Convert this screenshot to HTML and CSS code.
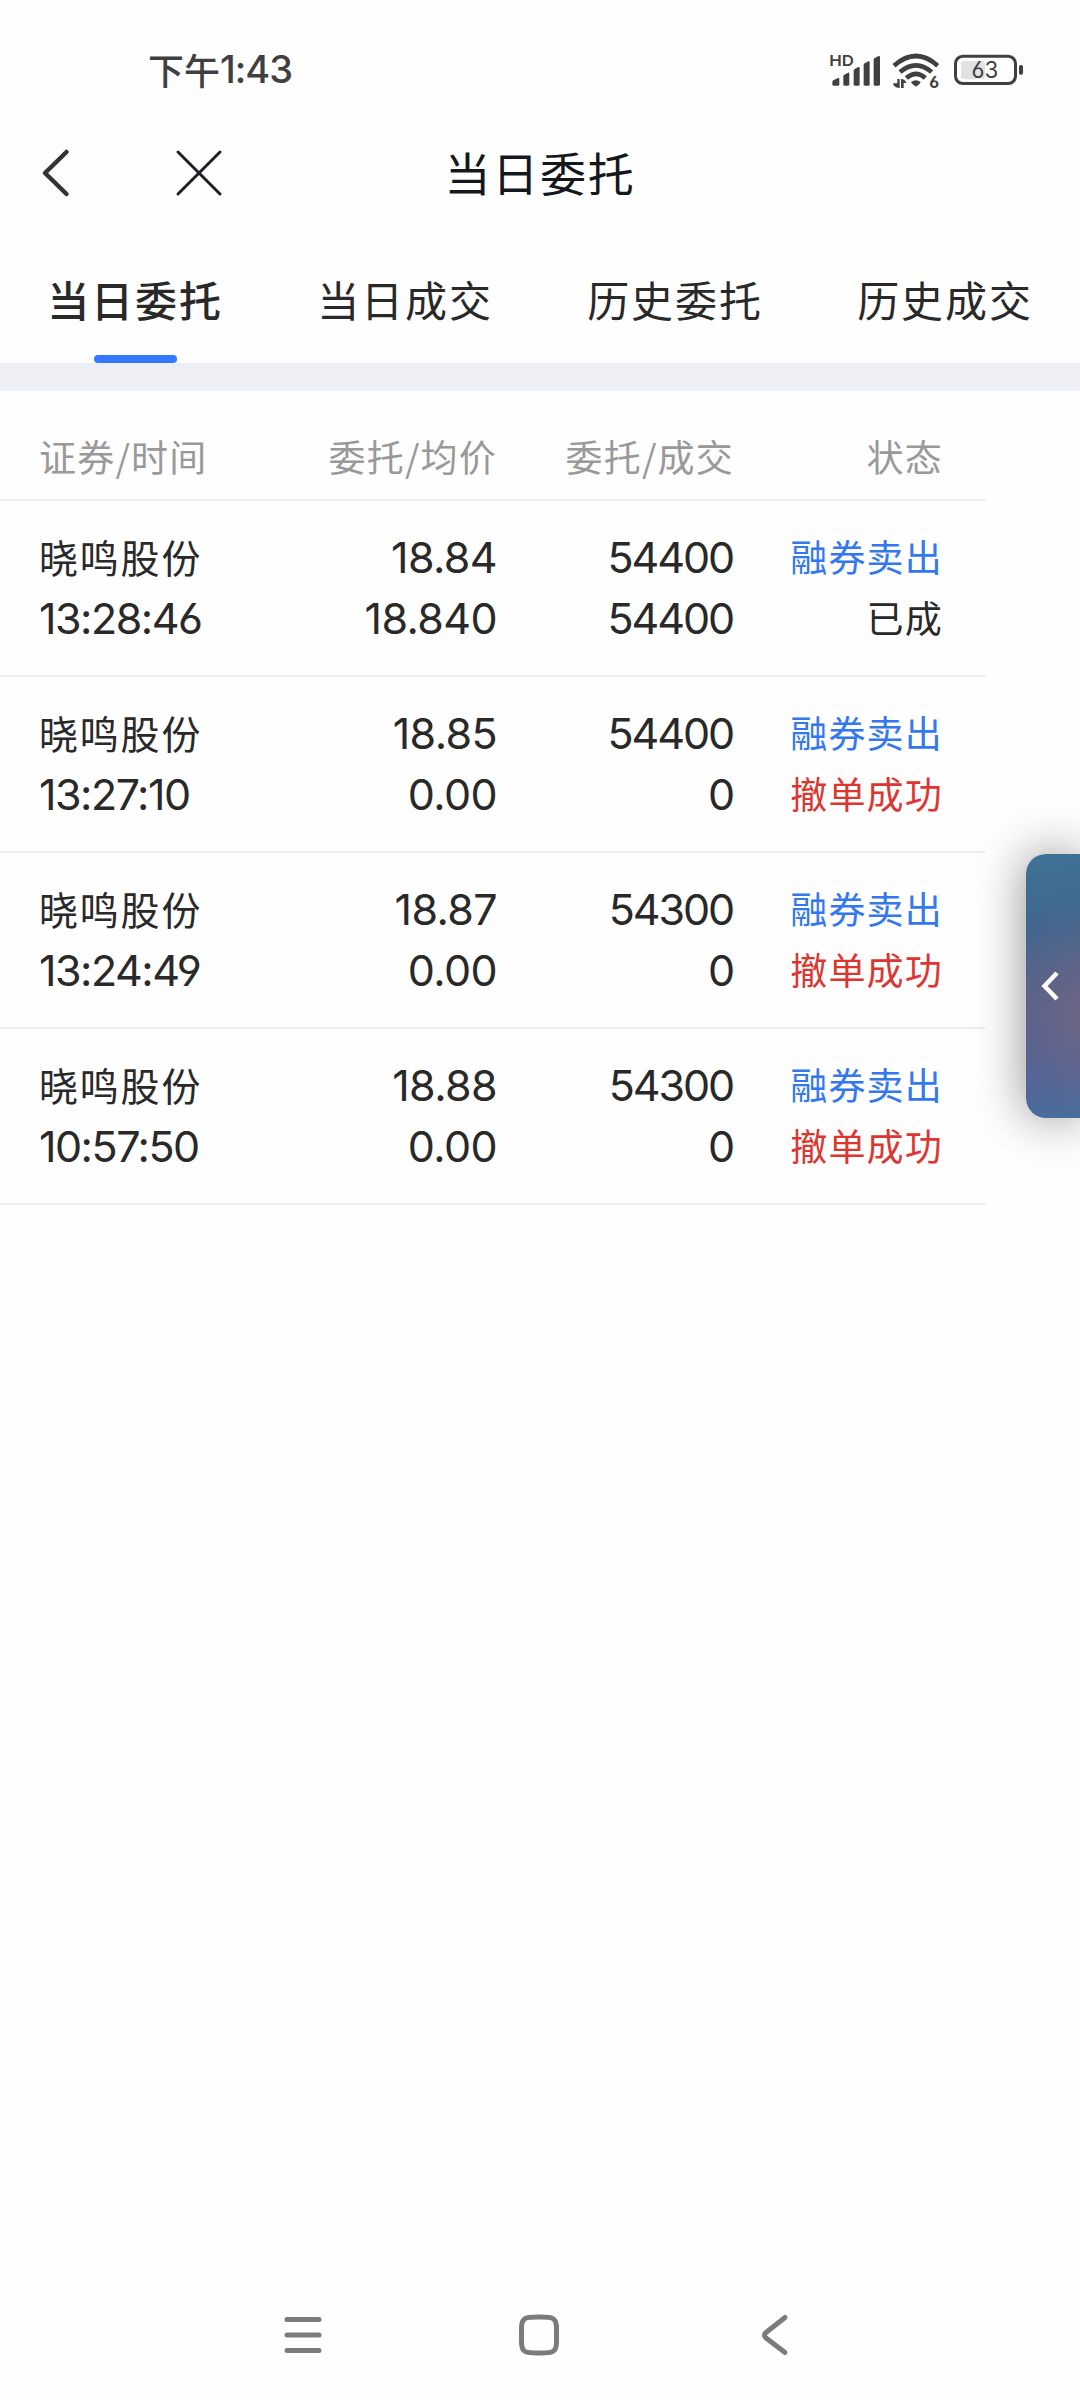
FILE: index.html
```html
<!DOCTYPE html>
<html lang="zh-CN">
<head>
    <meta charset="UTF-8">
    <meta name="viewport" content="width=device-width, initial-scale=1.0">
    <title>当日委托</title>
    <link rel="stylesheet" href="styles.css">
</head>
<body>

    <div class="status-bar">
        <div class="clock">下午<span class="clock-digits">1:43</span></div>
        <svg class="status-icons" viewBox="0 0 690 180">
            <text class="hd" x="58" y="78" textLength="74" lengthAdjust="spacingAndGlyphs">HD</text>
            <!-- signal -->
            <g class="fill">
                <path d="M67 133v-7q0-3 3-5l14-7q4-1 4 3v16q0 4-4 4H71q-4 0-4-4z"/>
                <path d="M100 133v-24q0-3 3-5l11-6q4-1 4 3v32q0 4-4 4h-10q-4 0-4-4z"/>
                <path d="M131 133V92q0-3 3-5l11-6q4-1 4 3v49q0 4-4 4h-10q-4 0-4-4z"/>
                <path d="M161 133V75q0-3 3-5l11-6q4-1 4 3v66q0 4-4 4h-10q-4 0-4-4z"/>
                <path d="M191 133V59q0-3 3-5l12-6q4-1 4 3v82q0 4-4 4h-11q-4 0-4-4z"/>
                <path d="M303 126q14-11 29 0-2 8-14 14-12-6-15-14z"/>
                <path d="M262 117h7v27q-12 0-19-9v-5h12z"/>
                <path d="M273 144v-27q12 0 16 12h-8v15z"/>
            </g>
            <!-- wifi -->
            <g class="arc">
                <path d="M252 77q66-58 131 0"/>
                <path d="M270 96q48-40 95 0"/>
                <path d="M289 114q29-25 57 0"/>
            </g>
            <text class="wifi-gen" x="358" y="144">6</text>
            <!-- battery -->
            <rect class="charge" x="453" y="63" width="72" height="54" rx="8"/>
            <rect class="shell" x="436.500" y="48.500" width="180" height="82" rx="22"/>
            <rect class="fill" x="627" y="75" width="12" height="29" rx="5"/>
            <text class="percent" x="525" y="114">63</text>
        </svg>
    </div>

    <header class="title-bar">
        <svg class="back" viewBox="0 0 34 54"><path d="M28.500 6 7 27l21.500 21"/></svg>
        <svg class="close" viewBox="0 0 50 50"><path d="M4 4l42 42M46 4 4 46"/></svg>
        <h1>当日委托</h1>
    </header>

    <nav class="tabs">
        <a class="tab active">当日委托</a>
        <a class="tab">当日成交</a>
        <a class="tab">历史委托</a>
        <a class="tab">历史成交</a>
    </nav>

    <main class="orders">
        <div class="row head">
            <span>证券/时间</span>
            <span>委托/均价</span>
            <span>委托/成交</span>
            <span>状态</span>
        </div>
        <div class="row">
            <span class="name">晓鸣股份</span>
            <span class="num">18.84</span>
            <span class="num amount">54400</span>
            <span class="sell">融券卖出</span>
            <span class="num time">13:28:46</span>
            <span class="num">18.840</span>
            <span class="num amount">54400</span>
            <span class="done">已成</span>
        </div>
        <div class="row">
            <span class="name">晓鸣股份</span>
            <span class="num">18.85</span>
            <span class="num amount">54400</span>
            <span class="sell">融券卖出</span>
            <span class="num time">13:27:10</span>
            <span class="num">0.00</span>
            <span class="num amount">0</span>
            <span class="cancelled">撤单成功</span>
        </div>
        <div class="row">
            <span class="name">晓鸣股份</span>
            <span class="num">18.87</span>
            <span class="num amount">54300</span>
            <span class="sell">融券卖出</span>
            <span class="num time">13:24:49</span>
            <span class="num">0.00</span>
            <span class="num amount">0</span>
            <span class="cancelled">撤单成功</span>
        </div>
        <div class="row">
            <span class="name">晓鸣股份</span>
            <span class="num">18.88</span>
            <span class="num amount">54300</span>
            <span class="sell">融券卖出</span>
            <span class="num time">10:57:50</span>
            <span class="num">0.00</span>
            <span class="num amount">0</span>
            <span class="cancelled">撤单成功</span>
        </div>
    </main>

    <!-- drawer handle floating over the right edge -->
    <div class="drawer">
        <svg viewBox="0 0 20 32"><path d="M17 3 4.500 16 17 29"/></svg>
    </div>

    <footer class="nav-bar">
        <svg viewBox="0 0 50 50"><path d="M9 9.500h32M9 25h32M9 40.500h32"/></svg>
        <svg viewBox="0 0 50 50"><path d="M25 7c12 0 17.500-.5 17.500 11v14c0 11.500-5.500 11-17.500 11S7.500 43.500 7.500 32V18C7.500 6.500 13 7 25 7z"/></svg>
        <svg viewBox="0 0 50 50"><path d="M35 7.500 16 22.500q-3 2.500 0 5.500l19 14.500"/></svg>
    </footer>

</body>
</html>
```

FILE: styles.css
```css
* {
    box-sizing: border-box;
}
body {
    margin: 0;
    position: relative;
    height: 2400px;
    display: flex;
    flex-direction: column;
    overflow: hidden;
    background: #fefefe;
    color: #292929;
    font-family: "Noto Sans CJK SC", sans-serif;
}
svg {
    display: block;
    fill: none;
    stroke-linecap: round;
    stroke-linejoin: round;
}

/* status bar */
.status-bar {
    display: flex;
    justify-content: space-between;
    align-items: flex-start;
    height: 100px;
    padding: 40px 40px 0 148px;
    color: #404040;
}
.clock {
    display: flex;
    align-items: center;
    height: 58px;
    font-size: 36px;
    font-weight: 500;
}
.clock-digits {
    font-family: Inter, sans-serif;
    font-size: 38px;
    letter-spacing: -1px;
}
.status-icons {
    width: 230px;
    height: 60px;
    font-family: Inter, sans-serif;
    font-feature-settings: "cv03";
}
.status-icons .fill,
.status-icons text {
    fill: #404040;
}
.arc path {
    stroke: #404040;
    stroke-width: 14;
    stroke-linecap: butt;
}
.hd {
    font-size: 45px;
    font-weight: 600;
}
.wifi-gen {
    font-size: 48px;
    font-weight: 700;
}
.charge {
    fill: #e2e2e2;
}
.shell {
    stroke: #404040;
    stroke-width: 9;
}
.percent {
    font-size: 67px;
    text-anchor: middle;
}

/* title bar */
.title-bar {
    display: grid;
    grid-template-columns: 136px 50px 1fr 224px;
    align-items: center;
    height: 146px;
    padding-left: 38px;
}
.title-bar h1 {
    margin: 0;
    padding-bottom: 5px;
    text-align: center;
    font-size: 46px;
    font-weight: 400;
    letter-spacing: 1.700px;
    color: #14171c;
}
.back {
    width: 34px;
    height: 54px;
    stroke: #333;
    stroke-width: 4.500;
}
.close {
    width: 50px;
    height: 50px;
    stroke: #1c1f26;
    stroke-width: 3;
}

/* tabs */
.tabs {
    display: grid;
    grid-template-columns: repeat(4, 270px);
    height: 145px;
    border-bottom: 28px solid #eeeff5;
}
.tab {
    display: flex;
    flex-direction: column;
    align-items: center;
    justify-content: space-between;
    padding-top: 23px;
    font-size: 42px;
    line-height: 60px;
    letter-spacing: 1.900px;
}
.tab.active {
    font-weight: 500;
}
.tab.active::after {
    content: "";
    width: 83px;
    height: 8px;
    border-radius: 4px;
    background: #3478ff;
}

/* orders */
.orders {
    width: 985px;
    flex: 1;
}
.row {
    display: grid;
    grid-template-columns: 261px 197px 237px 209px;
    grid-auto-rows: 61px;
    align-content: start;
    height: 176px;
    padding: 25px 42px 0 39px;
    border-bottom: 2px solid #ececec;
    font-size: 37px;
    line-height: 61px;
    letter-spacing: 1.200px;
    text-align: right;
}
.row > :nth-child(4n + 1) {
    text-align: left;
}
.row.head {
    height: 110px;
    padding-top: 35px;
    color: #999;
}
.name {
    font-size: 39px;
    letter-spacing: 1.800px;
}
.num {
    font-family: Inter, sans-serif;
    font-size: 43px;
    line-height: 63px;
    letter-spacing: -.600px;
    font-feature-settings: "cv03", "cv04";
}
.amount {
    padding-right: 1px;
    letter-spacing: -2.100px;
}
.time {
    letter-spacing: -1.500px;
}
.sell {
    color: #3478f0;
}
.cancelled {
    color: #dc3633;
}

/* drawer handle */
.drawer {
    position: absolute;
    top: 854px;
    right: 0;
    width: 54px;
    height: 264px;
    display: flex;
    align-items: center;
    padding-left: 14px;
    border-radius: 20px 0 0 20px;
    background:
        radial-gradient(circle at 64px 160px, rgba(120, 104, 126, .75), transparent 110px),
        linear-gradient(170deg, #3d7394 0%, #42668f 30%, #505f90 55%, #4f649a 80%, #486e9c 100%);
    box-shadow: 0 0 50px rgba(0, 0, 0, .45);
}
.drawer svg {
    width: 20px;
    height: 32px;
    stroke: #fff;
    stroke-width: 4.500;
    stroke-linecap: butt;
    stroke-linejoin: miter;
}

/* system navigation */
.nav-bar {
    display: flex;
    justify-content: center;
    gap: 186px;
    height: 90px;
    padding-right: 2px;
}
.nav-bar svg {
    width: 50px;
    height: 50px;
    stroke: #7b7b7b;
    stroke-width: 5;
}
```
